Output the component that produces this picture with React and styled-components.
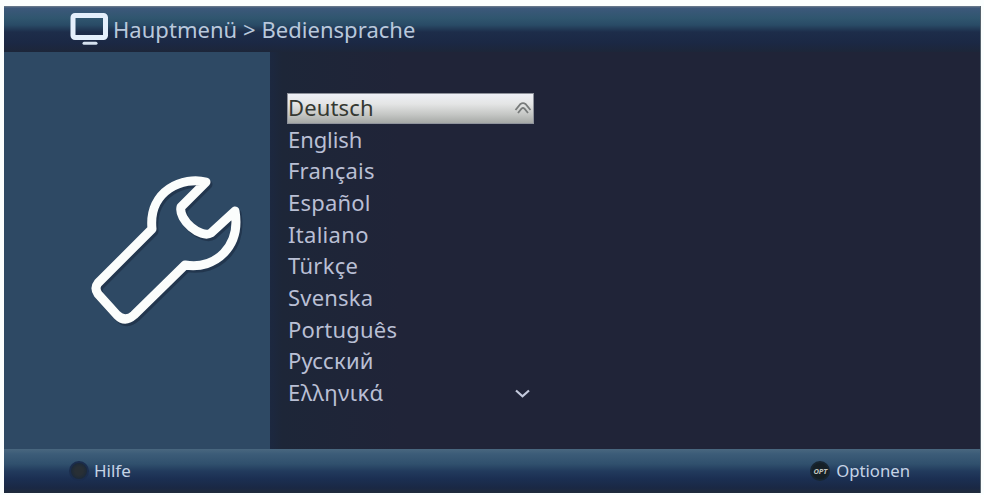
import styled, { createGlobalStyle } from "styled-components";

const GlobalStyle = createGlobalStyle`
    * {
        box-sizing: border-box;
    }
    body {
        margin: 0;
        background-color: #fbfefe;
        font-family: "Noto Sans", "Open Sans", sans-serif;
    }
`;

const Page = styled.div`
    width: 984px;
    height: 495px;
    padding: 6px 3px 2px 4px;
    overflow: hidden;
`;

const Screen = styled.div`
    width: 100%;
    height: 100%;

    display: flex;
    flex-direction: column;

    background-color: #202438;
    border-right: 1px solid #56616c;
`;

const Header = styled.header`
    height: 46px;
    padding-left: 66px;

    display: flex;
    flex-direction: row;
    align-items: center;

    color: #b9c8dc;
    background: linear-gradient(
        #70808f 0,
        #3c587a 2px,
        #30566f 12px,
        #294b66 19px,
        #1d2d4a 26px,
        #1b2844 37px,
        #1d2639 46px
    );
`;

const Title = styled.h1`
    margin: 0 0 1px 5px;

    font-size: 22px;
    font-weight: 400;
    line-height: 30px;
    letter-spacing: ${(props) => props.$spacing};
    white-space: pre;
`;

const Main = styled.main`
    height: 397px;
    display: flex;
    flex-direction: row;
`;

const Sidebar = styled.aside`
    width: 266px;
    padding: 115px 0 0 80px;
    background-color: #2e4964;
`;

const Content = styled.section`
    flex: 1;
    padding: 41px 0 0 17px;
    background: linear-gradient(90deg, #1c2840 0, #1d2638 12px, #202438 130px);
`;

const List = styled.ul`
    width: 247px;
    margin: 0;
    padding: 0;
    list-style: none;
`;

const Item = styled.li`
    height: 31.7px;
    padding: 0 2px 4px 1px;

    display: flex;
    flex-direction: row;
    justify-content: space-between;
    align-items: center;

    font-size: 22px;
    line-height: 30px;
    letter-spacing: ${(props) => props.$spacing || "0"};
    color: ${(props) => (props.$selected ? "#343832" : "#b9bfd4")};

    ${(props) =>
        props.$selected &&
        `
        height: 31px;
        margin-bottom: 0.7px;
        border: 1px solid #8f939c;
        padding: 0 0 4px 0;
        background: linear-gradient(#eef0f6 0, #e4e5e5 10px, #c6c8c6 20px, #a6a9a6 29px);
    `}
`;

const Footer = styled.footer`
    height: 44px;
    padding: 0 70px 0 65px;

    display: flex;
    flex-direction: row;
    justify-content: space-between;
    align-items: center;

    background: linear-gradient(
        #49677f 0,
        #3c5c78 5px,
        #30506d 15px,
        #223b5d 22px,
        #1b2f52 30px,
        #1a2844 39px,
        #202b3c 44px
    );
`;

const Action = styled.div`
    display: flex;
    flex-direction: row;
    align-items: center;
    gap: ${(props) => props.$gap};

    color: #c5d3e5;
    font-size: ${(props) => props.$size};
    line-height: 24px;
`;

const Knob = styled.span`
    width: 20px;
    height: 20px;
    flex: none;

    display: flex;
    justify-content: center;
    align-items: center;

    border-radius: 50%;
    border: 2px solid #1b2d4d;
    background: radial-gradient(#282f35 0 35%, #1b2939 75%);
`;

const OptKnob = styled(Knob)`
    border-color: #182632;
    background: #162026;

    color: #c2c6c0;
    font-size: 7.5px;
    font-weight: 700;
    font-style: italic;
    line-height: 10px;
    letter-spacing: -0.2px;
`;

const languages = [
    { name: "Deutsch", spacing: "0.15px" },
    { name: "English", spacing: "-0.1px" },
    { name: "Français", spacing: "0.2px" },
    { name: "Español", spacing: "0.2px" },
    { name: "Italiano", spacing: "0.3px" },
    { name: "Türkçe", spacing: "0.3px" },
    { name: "Svenska", spacing: "0.2px" },
    { name: "Português", spacing: "0.2px" },
    { name: "Русский", spacing: "0.2px" },
    { name: "Ελληνικά", spacing: "0.4px" },
];

const MonitorIcon = () => (
    <svg width="38" height="34" viewBox="0 0 38 34" fill="none">
        <rect x="3" y="3.5" width="32.5" height="22" rx="2" stroke="#e4effb" strokeWidth="5" />
        <path d="M14 31.3H26" stroke="#d5e2f0" strokeWidth="3" strokeLinecap="round" />
    </svg>
);

const WrenchIcon = () => (
    <svg width="176" height="170" viewBox="84 167 176 170" fill="none">
        <g strokeWidth="9" strokeLinejoin="round">
            <path
                transform="translate(2 2.5)"
                stroke="#1c2d42"
                opacity="0.65"
                d="M206 182 C184 176 148 190 152 229 L98 283 Q94 288 98 294 L117 315 Q125 323 134 315 L185 265 C216 270 241 246 235 211 L211 233 C201 239 178 220 181 207 Z"
            />
            <path
                stroke="#fbfdfc"
                d="M206 182 C184 176 148 190 152 229 L98 283 Q94 288 98 294 L117 315 Q125 323 134 315 L185 265 C216 270 241 246 235 211 L211 233 C201 239 178 220 181 207 Z"
            />
        </g>
    </svg>
);

const ScrollUpIcon = () => (
    <svg width="20" height="16" viewBox="0 0 20 16" fill="none" stroke="#777a7a" strokeWidth="1.8">
        <path d="M2.5 11 L7.5 5 Q10 3.2 12.5 5 L17.5 11" />
        <path d="M5 14 L8.5 9.6 Q10 8.4 11.5 9.6 L15 14" />
    </svg>
);

const ScrollDownIcon = () => (
    <svg width="20" height="14" viewBox="0 0 20 14" fill="none">
        <path d="M4 5.5 L10.5 11.3 L17 5.5" stroke="#c3c9dc" strokeWidth="2.2" />
    </svg>
);

const App = () => {
    return (
        <>
            <GlobalStyle />
            <Page>
                <Screen>
                    <Header>
                        <MonitorIcon />
                        <Title $spacing="0.04px">{"Hauptmenü > Bediensprache"}</Title>
                    </Header>
                    <Main>
                        <Sidebar>
                            <WrenchIcon />
                        </Sidebar>
                        <Content>
                            <List>
                                {languages.map(({ name, spacing }, index) => (
                                    <Item key={name} $selected={index === 0} $spacing={spacing}>
                                        <span>{name}</span>
                                        {index === 0 && <ScrollUpIcon />}
                                        {index === languages.length - 1 && <ScrollDownIcon />}
                                    </Item>
                                ))}
                            </List>
                        </Content>
                    </Main>
                    <Footer>
                        <Action $gap="5px" $size="17px">
                            <Knob />
                            <span>Hilfe</span>
                        </Action>
                        <Action $gap="6px" $size="16.7px">
                            <OptKnob>OPT</OptKnob>
                            <span>Optionen</span>
                        </Action>
                    </Footer>
                </Screen>
            </Page>
        </>
    );
};

export default App;
